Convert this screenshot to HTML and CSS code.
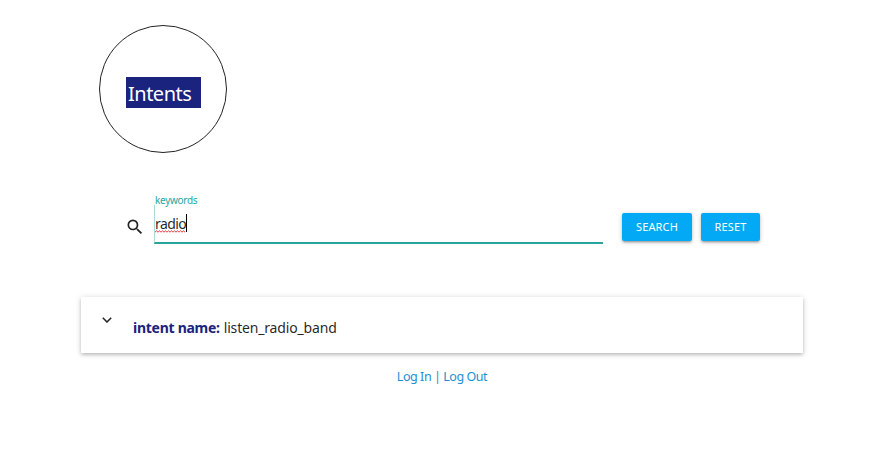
FILE: index.html
```html
<!DOCTYPE html>
<html lang="en">
<head>
<meta charset="utf-8">
<title>Intents</title>
<link rel="stylesheet" href="styles.css">
</head>
<body>
<main class="page">
  <header class="logo"><h1 class="logo-title">Intents</h1></header>
  <form class="search">
    <svg class="search-icon" viewBox="0 0 24 24"><path d="M15.5 14h-.79l-.28-.27A6.47 6.47 0 0 0 16 9.5 6.5 6.5 0 1 0 9.5 16c1.61 0 3.09-.59 4.23-1.57l.27.28v.79l5 4.99L20.49 19l-4.99-5zm-6 0C7.01 14 5 11.99 5 9.5S7.01 5 9.5 5 14 7.01 14 9.5 11.99 14 9.5 14z"/></svg>
    <div class="field">
      <span class="field-label">keywords</span>
      <div class="field-input">
        <span class="field-value">radio<svg class="squiggle" viewBox="0 0 31 3"><path d="M0 2.2 1.5.8 3 2.2 4.5.8 6 2.2 7.5.8 9 2.2 10.5.8 12 2.2 13.5.8 15 2.2 16.5.8 18 2.2 19.5.8 21 2.2 22.5.8 24 2.2 25.5.8 27 2.2 28.5.8 30 2.2"/></svg></span><span class="caret"></span>
      </div>
    </div>
    <button class="btn btn-search" type="button">SEARCH</button>
    <button class="btn btn-reset" type="button">RESET</button>
  </form>
  <section class="card">
    <svg class="chevron" viewBox="0 0 10 6"><path d="M.8.8 5 5 9.2.8"/></svg>
    <p class="intent"><strong class="intent-key">intent name:</strong><span class="intent-value">listen_radio_band</span></p>
  </section>
  <nav class="links"><a>Log In</a><span> | </span><a>Log Out</a></nav>
</main>
</body>
</html>
```
FILE: styles.css
```css
* { box-sizing: border-box; }
body {
  margin: 0;
  background: #fff;
  color: rgba(0, 0, 0, .87);
  font-family: "Noto Sans", "Open Sans", sans-serif;
}
.page {
  width: 722px;
  margin: 0 0 0 81px;
  padding-top: 25px;
}
.logo {
  display: flex;
  width: 128px;
  height: 128px;
  margin-left: 18px;
  padding: 51px 0 0 26px;
  border: 1px solid #222;
  border-radius: 50%;
}
.logo-title {
  width: 75px;
  height: 31px;
  margin: 0;
  padding-left: 2px;
  background: #1a237e;
  color: #fff;
  font-size: 20px;
  font-weight: 400;
  line-height: 33px;
  letter-spacing: -.5px;
}
.search {
  display: flex;
  align-items: flex-start;
  height: 50px;
  margin: 41px 0 0 44px;
}
.search-icon {
  width: 20px;
  height: 20px;
  margin-top: 23px;
  fill: #222;
}
.field {
  width: 449px;
  margin-left: 9px;
}
.field-label {
  display: block;
  height: 11px;
  padding-left: 1px;
  color: #26a69a;
  font-size: 10px;
  line-height: 13px;
  letter-spacing: -.3px;
}
.field-input {
  display: flex;
  height: 39px;
  border-bottom: 2px solid #26a69a;
  border-left: 1px solid #a8dcd5;
  font-size: 14px;
  line-height: 38px;
  letter-spacing: -.6px;
}
.field-value {
  position: relative;
  width: 31px;
}
.squiggle {
  position: absolute;
  left: 0;
  top: 25px;
  width: 31px;
  height: 3px;
  fill: none;
  stroke: #e53935;
}
.caret {
  width: 1px;
  height: 18px;
  margin-top: 9px;
  background: #000;
}
.btn {
  height: 28px;
  margin-top: 19px;
  padding: 0;
  border: 0;
  border-radius: 2px;
  background: #03a9f4;
  box-shadow: 0 2px 2px rgba(0, 0, 0, .14), 0 3px 1px -2px rgba(0, 0, 0, .12), 0 1px 5px rgba(0, 0, 0, .2);
  color: #fff;
  font-family: inherit;
  font-size: 11px;
  line-height: 28px;
  letter-spacing: .15px;
}
.btn-search { width: 70px; margin-left: 19px; }
.btn-reset { width: 59px; margin-left: 9px; }
.card {
  display: flex;
  height: 56px;
  margin-top: 53px;
  padding-left: 21px;
  background: #fff;
  box-shadow: 0 2px 3px rgba(0, 0, 0, .14), 0 1px 6px rgba(0, 0, 0, .18);
}
.chevron {
  width: 10px;
  height: 6px;
  margin-top: 20px;
  fill: none;
  stroke: #222;
  stroke-width: 1.5;
}
.intent {
  display: flex;
  gap: 4px;
  margin: 0 0 0 21px;
  font-size: 14px;
  line-height: 62px;
}
.intent-key { color: #1a237e; letter-spacing: -.27px; }
.intent-value { letter-spacing: -.17px; }
.links {
  margin-top: 14px;
  color: #1e8fcf;
  font-size: 12.5px;
  line-height: 20px;
  letter-spacing: -.45px;
  text-align: center;
}
```
